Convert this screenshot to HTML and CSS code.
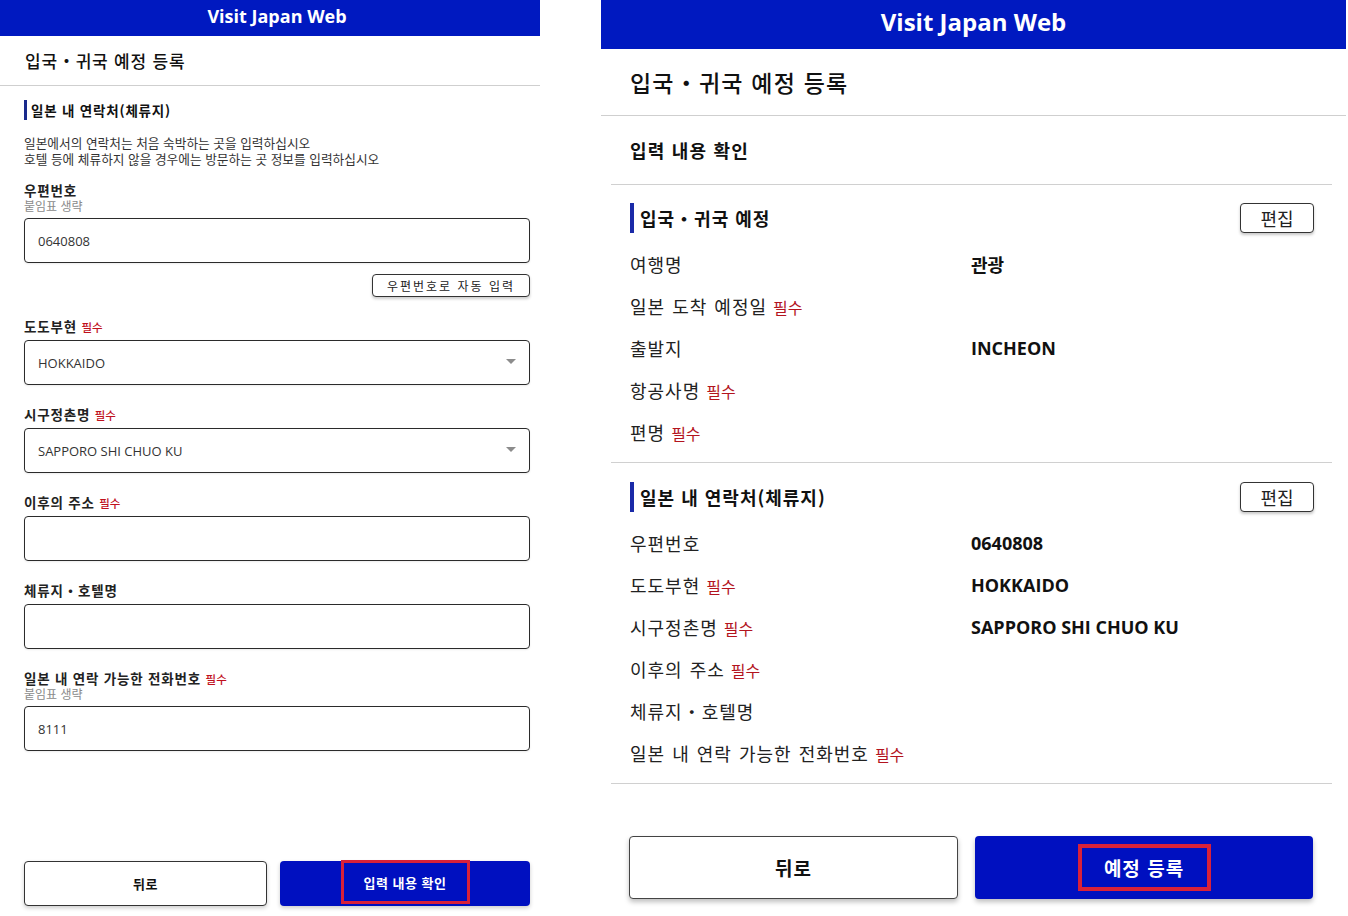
FILE: index.html
```html
<!DOCTYPE html>
<html lang="ko">
<head>
<meta charset="utf-8">
<title>Visit Japan Web</title>
<link rel="stylesheet" href="styles.css">
</head>
<body>
<div class="screens">
  <section class="phone phone-form">
    <header class="app-bar">Visit Japan Web</header>
    <div class="page-title">입국・귀국 예정 등록</div>
    <div class="form">
      <h2 class="form-head">일본 내 연락처(체류지)</h2>
      <p class="desc">일본에서의 연락처는 처음 숙박하는 곳을 입력하십시오<br>호텔 등에 체류하지 않을 경우에는 방문하는 곳 정보를 입력하십시오</p>

      <div class="field first">
        <div class="label">우편번호</div>
        <div class="hint">붙임표 생략</div>
        <div class="box">0640808</div>
      </div>
      <div class="auto-row"><button class="auto-btn">우편번호로 자동 입력</button></div>

      <div class="field">
        <div class="label">도도부현 <span class="req">필수</span></div>
        <div class="box">HOKKAIDO<span class="caret"></span></div>
      </div>

      <div class="field">
        <div class="label">시구정촌명 <span class="req">필수</span></div>
        <div class="box">SAPPORO SHI CHUO KU<span class="caret"></span></div>
      </div>

      <div class="field">
        <div class="label">이후의 주소 <span class="req">필수</span></div>
        <div class="box"></div>
      </div>

      <div class="field">
        <div class="label">체류지・호텔명</div>
        <div class="box"></div>
      </div>

      <div class="field">
        <div class="label">일본 내 연락 가능한 전화번호 <span class="req">필수</span></div>
        <div class="hint">붙임표 생략</div>
        <div class="box">8111</div>
      </div>
    </div>
    <div class="form-actions">
      <button class="sbtn sbtn-back">뒤로</button>
      <button class="sbtn sbtn-primary"><span class="mark mark-sm">입력 내용 확인</span></button>
    </div>
  </section>

  <section class="phone phone-confirm">
    <header class="app-bar">Visit Japan Web</header>
    <div class="page-title">입국・귀국 예정 등록</div>
    <div class="confirm">
      <div class="confirm-head">입력 내용 확인</div>

      <div class="sec">
        <div class="sec-top">
          <h3 class="sec-title">입국・귀국 예정</h3>
          <button class="edit">편집</button>
        </div>
        <div class="rows">
          <div class="row"><span>여행명</span><span class="val">관광</span></div>
          <div class="row"><span>일본 도착 예정일<span class="rreq">필수</span></span><span class="val"></span></div>
          <div class="row"><span>출발지</span><span class="val">INCHEON</span></div>
          <div class="row"><span>항공사명<span class="rreq">필수</span></span><span class="val"></span></div>
          <div class="row"><span>편명<span class="rreq">필수</span></span><span class="val"></span></div>
        </div>
      </div>

      <div class="sec">
        <div class="sec-top">
          <h3 class="sec-title">일본 내 연락처(체류지)</h3>
          <button class="edit">편집</button>
        </div>
        <div class="rows">
          <div class="row"><span>우편번호</span><span class="val">0640808</span></div>
          <div class="row"><span>도도부현<span class="rreq">필수</span></span><span class="val">HOKKAIDO</span></div>
          <div class="row"><span>시구정촌명<span class="rreq">필수</span></span><span class="val">SAPPORO SHI CHUO KU</span></div>
          <div class="row"><span>이후의 주소<span class="rreq">필수</span></span><span class="val"></span></div>
          <div class="row"><span>체류지・호텔명</span><span class="val"></span></div>
          <div class="row"><span>일본 내 연락 가능한 전화번호<span class="rreq">필수</span></span><span class="val"></span></div>
        </div>
      </div>

      <div class="actions">
        <button class="btn btn-back">뒤로</button>
        <button class="btn btn-primary"><span class="mark mark-lg">예정 등록</span></button>
      </div>
    </div>
  </section>
</div>
</body>
</html>
```
FILE: styles.css
```css
* { box-sizing: border-box; margin: 0; padding: 0; }

body {
  font-family: "Noto Sans CJK KR", "Noto Sans", sans-serif;
  color: #222;
  background: #fff;
  width: 1348px;
  height: 916px;
  overflow: hidden;
}

button { font-family: inherit; cursor: pointer; }

.screens { display: flex; height: 916px; }

.phone { display: flex; flex-direction: column; height: 916px; }
.phone-form { width: 540px; }
.phone-confirm { width: 745px; margin-left: 61px; }

/* Header bar */
.app-bar {
  background: #0019c0;
  color: #fff;
  font-family: "Open Sans", "Noto Sans", sans-serif;
  font-weight: 700;
  text-align: center;
}
.phone-form .app-bar { height: 36px; line-height: 32px; font-size: 18px; padding-left: 14px; }
.phone-confirm .app-bar { height: 49px; line-height: 43px; font-size: 24px; }

/* Page title */
.page-title {
  display: flex;
  align-items: center;
  border-bottom: 1px solid #cfcfcf;
  font-weight: 500;
  color: #111;
}
.phone-form .page-title { height: 50px; padding-left: 25px; font-size: 17px; letter-spacing: 0.8px; }
.phone-confirm .page-title { height: 67px; padding-left: 29px; font-size: 23px; letter-spacing: 1.2px; }

/* ---------- Left: form ---------- */
.form { padding: 0 10px 0 24px; }

.form-head {
  margin-top: 14px;
  height: 20px;
  line-height: 20px;
  border-left: 3px solid #1a2a8c;
  padding-left: 4px;
  font-size: 13.5px;
  font-weight: 700;
  color: #111;
  letter-spacing: 0.8px;
}

.desc {
  margin-top: 15px;
  font-size: 12.7px;
  line-height: 16px;
  color: #333;
}

.field { margin-top: 21px; }
.field.first { margin-top: 15px; }

.label {
  height: 16px;
  line-height: 16px;
  font-size: 13.5px;
  font-weight: 700;
  color: #222;
  letter-spacing: 0.8px;
}
.req { color: #c0101c; font-size: 11.5px; font-weight: 500; letter-spacing: 0; }

.hint {
  height: 15px;
  line-height: 15px;
  font-size: 12px;
  color: #8a8a8a;
}

.box {
  height: 45px;
  border: 1px solid #2b2b2b;
  border-radius: 4px;
  padding: 0 12px 0 13px;
  display: flex;
  align-items: center;
  justify-content: space-between;
  font-family: "Open Sans", "Noto Sans", sans-serif;
  font-size: 13px;
  color: #333;
  box-shadow: 0 1px 2px rgba(0, 0, 0, 0.08);
}
.label + .box { margin-top: 6px; }
.hint + .box { margin-top: 5px; }

.caret {
  width: 0;
  height: 0;
  border-left: 5px solid transparent;
  border-right: 5px solid transparent;
  border-top: 5px solid #8c8c8c;
  margin-right: 1px;
  margin-top: -2px;
}

.auto-row { display: flex; justify-content: flex-end; margin-top: 11px; }
.auto-btn {
  width: 158px;
  height: 23px;
  border: 1px solid #333;
  border-radius: 4px;
  background: #fff;
  font-size: 12px;
  letter-spacing: 2px;
  color: #222;
  box-shadow: 0 2px 3px rgba(0, 0, 0, 0.2);
}

.form-actions {
  margin-top: auto;
  padding: 0 10px 10px 24px;
  display: flex;
  gap: 13px;
}
.sbtn {
  height: 45px;
  border-radius: 4px;
  font-size: 13px;
  font-weight: 700;
  display: flex;
  align-items: center;
  justify-content: center;
  box-shadow: 0 2px 4px rgba(0, 0, 0, 0.2);
  letter-spacing: 0.5px;
}
.sbtn-back { width: 243px; background: #fff; border: 1px solid #333; color: #111; }
.sbtn-primary { width: 250px; background: #0010c0; border: none; color: #fff; }

.mark {
  display: inline-flex;
  align-items: center;
  justify-content: center;
  border-style: solid;
  border-color: #d9213a;
}
.mark-sm { width: 129px; height: 44px; border-width: 3px; margin-top: -3px; }
.mark-lg { width: 133px; height: 47px; border-width: 4px; }

/* ---------- Right: confirm ---------- */
.confirm { margin: 0 14px 0 10px; display: flex; flex-direction: column; }

.confirm-head {
  height: 69px;
  border-bottom: 1px solid #d0d0d0;
  padding-left: 19px;
  display: flex;
  align-items: center;
  font-size: 18px;
  font-weight: 700;
  color: #111;
  letter-spacing: 1.2px;
}

.sec {
  padding: 18px 18px 9px 19px;
  border-bottom: 1px solid #d0d0d0;
}
.sec + .sec { padding-top: 19px; }

.sec-top {
  display: flex;
  justify-content: space-between;
  align-items: center;
  height: 30px;
}
.sec-title {
  height: 30px;
  line-height: 30px;
  border-left: 4px solid #1a2aa8;
  padding-left: 6px;
  font-size: 18px;
  font-weight: 700;
  color: #111;
  letter-spacing: 1px;
}
.edit {
  width: 74px;
  height: 30px;
  border: 1px solid #333;
  border-radius: 4px;
  background: #fff;
  font-size: 18px;
  color: #222;
  box-shadow: 0 2px 3px rgba(0, 0, 0, 0.22);
}

.rows { margin-top: 10px; }
.row {
  display: grid;
  grid-template-columns: 341px 1fr;
  align-items: center;
  height: 42px;
  font-size: 18px;
  color: #222;
  letter-spacing: 1px;
  word-spacing: 1px;
}
.rreq { color: #b3141e; font-size: 16px; margin-left: 6px; letter-spacing: 0; }
.val {
  font-family: "Open Sans", "Noto Sans CJK KR", sans-serif;
  font-weight: 700;
  color: #111;
  letter-spacing: 0;
  word-spacing: 0;
}

.actions {
  margin-top: 52px;
  padding: 0 18px 0 18px;
  display: flex;
  gap: 17px;
}
.btn {
  height: 63px;
  border-radius: 4px;
  font-size: 19px;
  font-weight: 700;
  display: flex;
  align-items: center;
  justify-content: center;
  box-shadow: 0 3px 5px rgba(0, 0, 0, 0.25);
  letter-spacing: 1px;
}
.btn-back { width: 329px; background: #fff; border: 1px solid #444; color: #111; }
.btn-primary { width: 338px; background: #0010c0; border: none; color: #fff; }
```
